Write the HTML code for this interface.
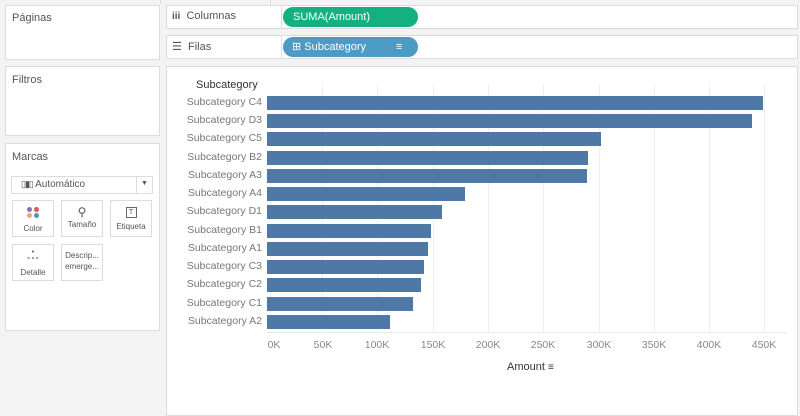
<!DOCTYPE html>
<html><head><meta charset="utf-8"><style>
body{margin:0;width:800px;height:413px;background:#f3f3f3;font-family:"Liberation Sans",sans-serif;position:relative;overflow:hidden;font-size:11px;color:#555}
.p{position:absolute;background:#fff;border:1px solid #dcdcdc;box-sizing:border-box}
.t{position:absolute;font-size:11px;color:#555}
.pill{position:absolute;height:20px;border-radius:10px;color:#fff;font-size:11px;line-height:20px;box-sizing:border-box;padding-left:10px}
.btn{position:absolute;width:42px;height:37px;border:1px solid #dcdcdc;background:#fff;box-sizing:border-box;font-size:8px;text-align:center;color:#555}
.lab{position:absolute;right:538px;font-size:10.5px;color:#777;text-align:right;white-space:nowrap}
.bar{position:absolute;left:267px;height:14px;background:#4e79a7}
.g{position:absolute;top:84px;height:248px;width:1px;background:#efefef}
.ax{position:absolute;top:339px;font-size:10.5px;color:#888;transform:translateX(-50%)}
.d{display:inline-block;width:5px;height:5px;border-radius:50%;margin:0 1px}
</style></head><body>
<div style="position:absolute;left:160px;top:0;width:1px;height:4px;background:#ddd"></div>
<div style="position:absolute;left:270px;top:0;width:1px;height:4px;background:#ddd"></div>
<div class="p" style="left:5px;top:5px;width:155px;height:55px"></div><div class="t" style="left:12px;top:12px">Páginas</div>
<div class="p" style="left:5px;top:66px;width:155px;height:70px"></div><div class="t" style="left:12px;top:74px">Filtros</div>
<div class="p" style="left:5px;top:143px;width:155px;height:188px"></div><div class="t" style="left:12px;top:151px">Marcas</div>
<div class="p" style="left:11px;top:176px;width:142px;height:18px"></div>
<div class="t" style="left:21px;top:179px;font-size:10px"><span style="font-size:9px;letter-spacing:-1px">▯▮▯</span> Automático</div>
<div style="position:absolute;left:136px;top:177px;width:1px;height:16px;background:#ddd"></div>
<div class="t" style="left:141px;top:180px;font-size:7px">▼</div>
<div class="btn" style="left:12px;top:200px"><div style="margin:6px auto 0;width:16px;line-height:6px"><span class="d" style="background:#8e6fb0"></span><span class="d" style="background:#e15759"></span><br><span class="d" style="background:#e7a77a"></span><span class="d" style="background:#5f8fc0"></span></div><div style="margin-top:5px">Color</div></div>
<div class="btn" style="left:61px;top:200px"><div style="margin-top:4px;font-size:12px">⚲</div><div style="margin-top:1px">Tamaño</div></div>
<div class="btn" style="left:110px;top:200px"><div style="margin:6px auto 0;width:9px;height:9px;border:1px solid #666;font-size:7px;line-height:9px">T</div><div style="margin-top:4px">Etiqueta</div></div>
<div class="btn" style="left:12px;top:244px"><div style="margin-top:5px;font-size:7px;line-height:6px">•<br>∘∘∘</div><div style="margin-top:6px">Detalle</div></div>
<div class="btn" style="left:61px;top:244px;line-height:11px"><div style="margin-top:5px">Descrip...<br>emerge...</div></div>

<div class="p" style="left:166px;top:5px;width:632px;height:24px"></div>
<div style="position:absolute;left:281px;top:6px;width:1px;height:22px;background:#ddd"></div>
<div class="t" style="left:172px;top:10px"><b style="font-size:10px">iii</b>&nbsp; Columnas</div>
<div class="pill" style="left:283px;top:7px;width:135px;background:#15b07f">SUMA(Amount)</div>
<div class="p" style="left:166px;top:35px;width:632px;height:24px"></div>
<div style="position:absolute;left:281px;top:36px;width:1px;height:22px;background:#ddd"></div>
<div class="t" style="left:172px;top:40px">☰&nbsp; Filas</div>
<div class="pill" style="left:283px;top:37px;width:135px;background:#4d9ac4;padding-left:9px">⊞ Subcategory<span style="position:absolute;left:113px">≡</span></div>

<div class="p" style="left:166px;top:66px;width:632px;height:350px"></div>
<div class="g" style="left:322px"></div><div class="g" style="left:377px"></div><div class="g" style="left:433px"></div><div class="g" style="left:488px"></div><div class="g" style="left:543px"></div><div class="g" style="left:599px"></div><div class="g" style="left:654px"></div><div class="g" style="left:709px"></div><div class="g" style="left:764px"></div>
<div style="position:absolute;left:267px;top:332px;width:520px;height:1px;background:#e8e8e8"></div>
<div class="t" style="left:196px;top:79px;color:#333;font-size:11px">Subcategory</div>
<div class="lab" style="top:96px">Subcategory C4</div><div class="bar" style="top:96px;width:496px"></div>
<div class="lab" style="top:114px">Subcategory D3</div><div class="bar" style="top:114px;width:485px"></div>
<div class="lab" style="top:132px">Subcategory C5</div><div class="bar" style="top:132px;width:334px"></div>
<div class="lab" style="top:151px">Subcategory B2</div><div class="bar" style="top:151px;width:321px"></div>
<div class="lab" style="top:169px">Subcategory A3</div><div class="bar" style="top:169px;width:320px"></div>
<div class="lab" style="top:187px">Subcategory A4</div><div class="bar" style="top:187px;width:198px"></div>
<div class="lab" style="top:205px">Subcategory D1</div><div class="bar" style="top:205px;width:175px"></div>
<div class="lab" style="top:224px">Subcategory B1</div><div class="bar" style="top:224px;width:164px"></div>
<div class="lab" style="top:242px">Subcategory A1</div><div class="bar" style="top:242px;width:161px"></div>
<div class="lab" style="top:260px">Subcategory C3</div><div class="bar" style="top:260px;width:157px"></div>
<div class="lab" style="top:278px">Subcategory C2</div><div class="bar" style="top:278px;width:154px"></div>
<div class="lab" style="top:297px">Subcategory C1</div><div class="bar" style="top:297px;width:146px"></div>
<div class="lab" style="top:315px">Subcategory A2</div><div class="bar" style="top:315px;width:123px"></div>
<div class="ax" style="left:274px">0K</div><div class="ax" style="left:323px">50K</div><div class="ax" style="left:377px">100K</div><div class="ax" style="left:433px">150K</div><div class="ax" style="left:488px">200K</div><div class="ax" style="left:543px">250K</div><div class="ax" style="left:599px">300K</div><div class="ax" style="left:654px">350K</div><div class="ax" style="left:709px">400K</div><div class="ax" style="left:764px">450K</div>
<div class="t" style="left:507px;top:361px;color:#333">Amount <span style="font-size:10px">≡</span></div>
</body></html>
